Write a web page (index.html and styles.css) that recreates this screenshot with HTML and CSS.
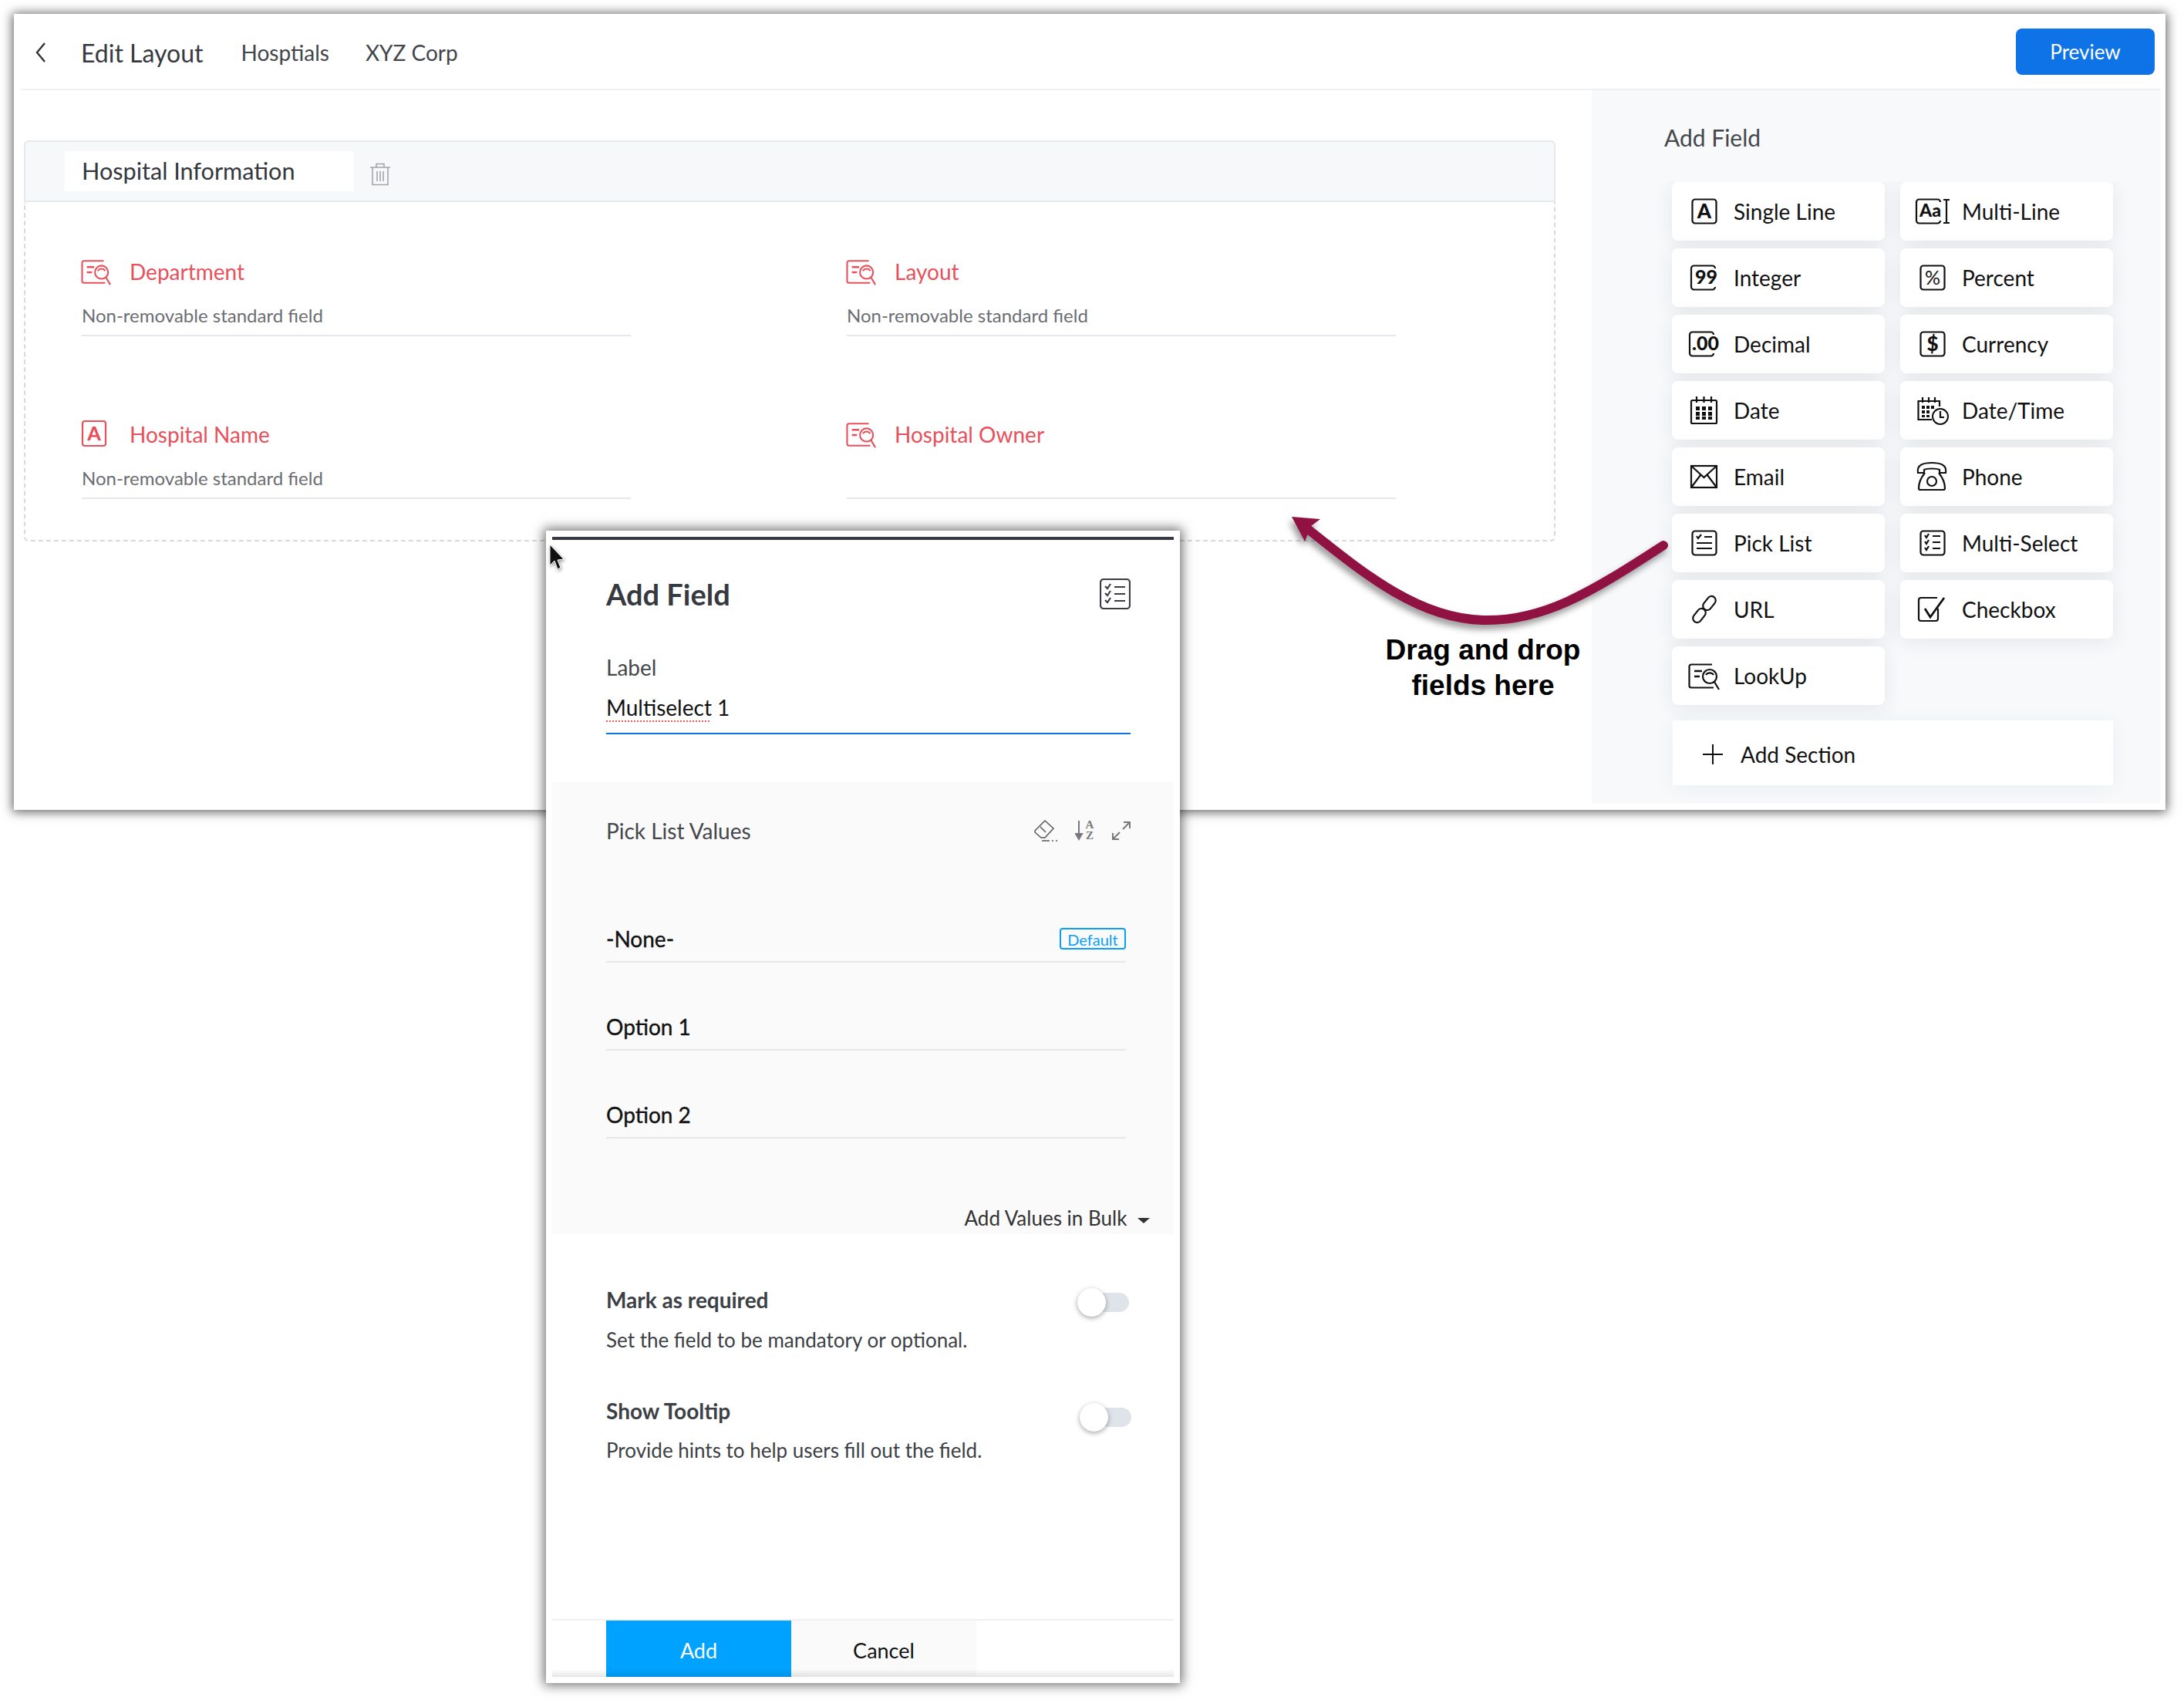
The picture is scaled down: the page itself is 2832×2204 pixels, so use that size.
FILE: index.html
```html
<!DOCTYPE html>
<html lang="en">
<head>
  <meta charset="UTF-8">
  <title>Edit Layout</title>
  <link rel="stylesheet" href="styles.css">
</head>
<body>

  <svg class="defs" width="0" height="0">
    <symbol id="i-lookup" viewBox="0 0 46 40">
      <path d="M33 5.5 H6 a2.5 2.5 0 0 0 -2.5 2.5 V33 a2.5 2.5 0 0 0 2.5 2.5 H35" fill="none" stroke="currentColor" stroke-width="2.2"/>
      <path d="M10 14 H20 M10 21 H17" fill="none" stroke="currentColor" stroke-width="2.6"/>
      <circle cx="30" cy="21" r="9" fill="#fff" stroke="currentColor" stroke-width="2.2"/>
      <path d="M25 19 a6 6 0 0 1 10 0 M36 28 L42 38" fill="none" stroke="currentColor" stroke-width="2.2"/>
    </symbol>
  </svg>

  <div class="window">
    <header class="topbar">
      <svg class="back" width="16" height="28" viewBox="0 0 16 28"><path d="M13 2 L3 14 L13 26" fill="none" stroke="#333" stroke-width="2.4"/></svg>
      <h1 class="page-title">Edit Layout</h1>
      <span class="crumb">Hosptials</span>
      <span class="crumb">XYZ Corp</span>
      <button class="btn-preview">Preview</button>
    </header>

    <div class="main">
      <div class="canvas">
        <section class="section">
          <div class="section-head">
            <div class="section-name">Hospital Information</div>
            <svg class="trash" width="28" height="30" viewBox="0 0 28 30">
              <path d="M1 6 H27 M9 6 V1.5 H19 V6 M4 6 V28.5 H24 V6 M10 11 V24 M14 11 V24 M18 11 V24" fill="none" stroke="#a2a4a8" stroke-width="1.6"/>
            </svg>
          </div>
          <div class="section-body">
            <div class="field">
              <div class="field-head">
                <svg class="field-icon" width="44" height="38"><use href="#i-lookup"/></svg>
                <span>Department</span>
              </div>
              <div class="field-sub">Non-removable standard field</div>
            </div>
            <div class="field">
              <div class="field-head">
                <svg class="field-icon" width="44" height="38"><use href="#i-lookup"/></svg>
                <span>Layout</span>
              </div>
              <div class="field-sub">Non-removable standard field</div>
            </div>
            <div class="field">
              <div class="field-head">
                <svg class="field-icon" width="44" height="38" viewBox="-3 -2 44 38">
                  <rect x="1" y="0" width="30" height="32" rx="3" fill="none" stroke="currentColor" stroke-width="2.2"/>
                  <text x="16" y="25" text-anchor="middle" class="icon-text" font-size="25">A</text>
                </svg>
                <span>Hospital Name</span>
              </div>
              <div class="field-sub">Non-removable standard field</div>
            </div>
            <div class="field">
              <div class="field-head">
                <svg class="field-icon" width="44" height="38"><use href="#i-lookup"/></svg>
                <span>Hospital Owner</span>
              </div>
              <div class="field-sub"></div>
            </div>
          </div>
        </section>
      </div>

      <aside class="side">
        <h2 class="side-title">Add Field</h2>
        <div class="tiles">
          <div class="tile">
            <svg class="tile-icon" width="46" height="40" viewBox="0 0 46 40">
              <rect x="7.500" y="4.500" width="31" height="31" rx="3.500" class="ln"/>
              <text x="23" y="29" text-anchor="middle" class="icon-text" font-size="26">A</text>
            </svg>
            <span>Single Line</span>
          </div>
          <div class="tile">
            <svg class="tile-icon" width="46" height="40" viewBox="0 0 46 40">
              <path d="M33 8 a3.500 3.500 0 0 0 -3.500 -3.500 H5.500 a3.500 3.500 0 0 0 -3.500 3.500 V32 a3.500 3.500 0 0 0 3.500 3.500 H29.500 a3.500 3.500 0 0 0 3.500 -3.500" class="ln"/>
              <text x="6" y="27" class="icon-text" font-size="23">Aa</text>
              <path d="M37 5 H45 M41 5 V35 M37 35 H45" class="ln"/>
            </svg>
            <span>Multi-Line</span>
          </div>
          <div class="tile">
            <svg class="tile-icon" width="46" height="40" viewBox="0 0 46 40">
              <path d="M37 8 a3.500 3.500 0 0 0 -3.500 -3.500 H9.500 a3.500 3.500 0 0 0 -3.500 3.500 V32 a3.500 3.500 0 0 0 3.500 3.500 H33.500 a3.500 3.500 0 0 0 3.500 -3.500" class="ln"/>
              <text x="11" y="28" class="icon-text" font-size="25">99</text>
            </svg>
            <span>Integer</span>
          </div>
          <div class="tile">
            <svg class="tile-icon" width="46" height="40" viewBox="0 0 46 40">
              <rect x="7.500" y="4.500" width="31" height="31" rx="3.500" class="ln"/>
              <text x="23" y="29" text-anchor="middle" class="icon-text-thin" font-size="25">%</text>
            </svg>
            <span>Percent</span>
          </div>
          <div class="tile">
            <svg class="tile-icon" width="46" height="40" viewBox="0 0 46 40">
              <path d="M35 8 a3.500 3.500 0 0 0 -3.500 -3.500 H7.500 a3.500 3.500 0 0 0 -3.500 3.500 V32 a3.500 3.500 0 0 0 3.500 3.500 H31.500 a3.500 3.500 0 0 0 3.500 -3.500" class="ln"/>
              <text x="7" y="28" class="icon-text" font-size="25">.00</text>
            </svg>
            <span>Decimal</span>
          </div>
          <div class="tile">
            <svg class="tile-icon" width="46" height="40" viewBox="0 0 46 40">
              <rect x="7.500" y="4.500" width="31" height="31" rx="3.500" class="ln"/>
              <text x="23" y="29" text-anchor="middle" class="icon-text" font-size="26">$</text>
            </svg>
            <span>Currency</span>
          </div>
          <div class="tile">
            <svg class="tile-icon" width="46" height="40" viewBox="0 0 46 40">
              <rect x="6" y="7" width="33" height="30" rx="1.500" class="ln"/>
              <path d="M13 2 V10 M22.500 2 V10 M32 2 V10" class="ln"/>
              <path d="M12 15 h5 v5 h-5z M20 15 h5 v5 h-5z M28 15 h5 v5 h-5z M12 22 h5 v5 h-5z M20 22 h5 v5 h-5z M28 22 h5 v5 h-5z M12 28 h5 v4 h-5z M20 28 h5 v4 h-5z M28 28 h5 v4 h-5z" fill="#111"/>
            </svg>
            <span>Date</span>
          </div>
          <div class="tile">
            <svg class="tile-icon" width="46" height="40" viewBox="0 0 46 40">
              <path d="M22 32 H4.500 V8 H32 V15" class="ln"/>
              <path d="M10 3 V10 M18 3 V10 M26 3 V10" class="ln"/>
              <path d="M9 14 h4 v4 h-4z M15 14 h4 v4 h-4z M21 14 h4 v4 h-4z M9 20 h4 v4 h-4z M15 20 h4 v4 h-4z M9 26 h4 v3 h-4z M15 26 h4 v3 h-4z" fill="#111"/>
              <circle cx="33" cy="28" r="10" fill="#fff" stroke="#111" stroke-width="2"/>
              <path d="M33 21 V29 H38" class="ln"/>
            </svg>
            <span>Date/Time</span>
          </div>
          <div class="tile">
            <svg class="tile-icon" width="46" height="40" viewBox="0 0 46 40">
              <rect x="6" y="6" width="33" height="28" class="ln"/>
              <path d="M6 6 L22.500 21 L39 6 M6 34 L18 18 M39 34 L27 18" class="ln"/>
            </svg>
            <span>Email</span>
          </div>
          <div class="tile">
            <svg class="tile-icon" width="46" height="40" viewBox="0 0 46 40">
              <path d="M4 15 C2 4 12 2 22 2 C32 2 42 4 40 15 H32 V11 C28 9 16 9 12 11 V15 Z" class="ln"/>
              <path d="M13 15 C9 20 5 28 5 35 a2 2 0 0 0 2 2 H37 a2 2 0 0 0 2 -2 C39 28 35 20 31 15" class="ln"/>
              <circle cx="22" cy="26" r="6" class="ln"/>
            </svg>
            <span>Phone</span>
          </div>
          <div class="tile">
            <svg class="tile-icon" width="46" height="40" viewBox="0 0 46 40">
              <rect x="7.500" y="4.500" width="31" height="31" rx="3.500" class="ln"/>
              <path d="M13 11 L15 14 L19 9 M23 12 H33 M13 20 H33 M13 27 H33" class="ln"/>
            </svg>
            <span>Pick List</span>
          </div>
          <div class="tile">
            <svg class="tile-icon" width="46" height="40" viewBox="0 0 46 40">
              <rect x="7.500" y="4.500" width="31" height="31" rx="3.500" class="ln"/>
              <path d="M13 10 L15 13 L18 8 M13 18 L15 21 L18 16 M13 26 L15 29 L18 24 M23 11 H33 M23 19 H33 M23 27 H33" class="ln"/>
            </svg>
            <span>Multi-Select</span>
          </div>
          <div class="tile">
            <svg class="tile-icon" width="46" height="40" viewBox="0 0 46 40">
              <rect x="24" y="2" width="11" height="20" rx="5.500" transform="rotate(38 29.500 12)" class="ln"/>
              <rect x="11" y="18" width="11" height="20" rx="5.500" transform="rotate(38 16.500 28)" class="ln"/>
            </svg>
            <span>URL</span>
          </div>
          <div class="tile">
            <svg class="tile-icon" width="46" height="40" viewBox="0 0 46 40">
              <path d="M29 5 H8 a3 3 0 0 0 -3 3 V32 a3 3 0 0 0 3 3 H27 a3 3 0 0 0 3 -3 V19" class="ln"/>
              <path d="M13 19 L20 30 L38 5" fill="none" stroke="#111" stroke-width="2.800"/>
            </svg>
            <span>Checkbox</span>
          </div>
          <div class="tile">
            <svg class="tile-icon" width="46" height="40"><use href="#i-lookup"/></svg>
            <span>LookUp</span>
          </div>
        </div>
        <div class="add-section">
          <svg width="28" height="28" viewBox="0 0 28 28"><path d="M14 1 V27 M1 14 H27" fill="none" stroke="#111" stroke-width="2"/></svg>
          <span>Add Section</span>
        </div>
      </aside>
    </div>
  </div>

  <!-- callout over the screenshot -->
  <svg class="arrow" width="520" height="170" viewBox="1660 660 520 170">
    <path d="M2157 707 C2060 770 2000 806 1923 804 C1840 802 1770 745 1696 686" fill="none" stroke="#8f1243" stroke-width="12" stroke-linecap="round"/>
    <path d="M1675 670 L1712 673 L1700 682 L1692 702 Z" fill="#8f1243"/>
  </svg>
  <div class="hint">Drag and drop<br>fields here</div>

  <div class="dialog">
    <div class="dialog-bar"></div>
    <svg class="cursor" width="24" height="38" viewBox="0 0 24 38"><path d="M2 1 V28 L8 22 L12 33 L16 31 L12 21 L20 20 Z" fill="#111" stroke="#fff" stroke-width="1"/></svg>

    <div class="dialog-head">
      <h2 class="dialog-title">Add Field</h2>
      <svg width="40" height="40" viewBox="0 0 40 40">
        <rect x="1" y="1" width="38" height="38" rx="4" fill="none" stroke="#3a3d44" stroke-width="2.200"/>
        <path d="M7 10 L10 13 L14 7 M7 19 L10 22 L14 16 M7 28 L10 31 L14 25 M19 11 H33 M19 20 H33 M19 29 H33" fill="none" stroke="#3a3d44" stroke-width="2.200"/>
      </svg>
    </div>

    <div class="label-row">Label</div>
    <div class="value-row"><span class="misspelt">Multiselect</span> 1</div>

    <div class="values">
      <div class="values-head">
        <span>Pick List Values</span>
        <div class="values-tools">
          <svg width="32" height="30" viewBox="0 0 32 30">
            <path d="M2 15 L15 2 L26 12 L15 24 H10 L2 17 Z M9 10 L16 17 M11 28 H21 M24 28 H26 M29 28 H31" fill="none" stroke="#55585e" stroke-width="1.500"/>
          </svg>
          <svg width="26" height="34" viewBox="0 -3 26 34">
            <path d="M5 1 V21 M1 18 L5 25 L9 18 Z" fill="#77797d" stroke="#77797d" stroke-width="2"/>
            <text x="19" y="11" text-anchor="middle" class="az-text">A</text>
            <text x="19" y="25" text-anchor="middle" class="az-text">Z</text>
          </svg>
          <svg width="24" height="24" viewBox="0 0 24 24">
            <path d="M14 10 L23 1 M15 1 H23 V9 M10 14 L1 23 M1 15 V23 H9" fill="none" stroke="#77797d" stroke-width="2"/>
          </svg>
        </div>
      </div>
      <div class="value-item value-first"><span>-None-</span><span class="badge">Default</span></div>
      <div class="value-item"><span>Option 1</span></div>
      <div class="value-item"><span>Option 2</span></div>
      <div class="bulk">Add Values in Bulk <span class="caret"></span></div>
    </div>

    <div class="opt opt-first">
      <div>
        <div class="opt-title">Mark as required</div>
        <div class="opt-desc">Set the field to be mandatory or optional.</div>
      </div>
      <div class="toggle"><span class="knob"></span></div>
    </div>
    <div class="opt opt-second">
      <div>
        <div class="opt-title">Show Tooltip</div>
        <div class="opt-desc">Provide hints to help users fill out the field.</div>
      </div>
      <div class="toggle"><span class="knob"></span></div>
    </div>

    <div class="dialog-foot">
      <button class="btn-add">Add</button>
      <button class="btn-cancel">Cancel</button>
    </div>
  </div>

</body>
</html>
```

FILE: styles.css
```css
* {
  box-sizing: border-box;
}

body {
  margin: 0;
  font-family: Lato, "Open Sans", sans-serif;
  color: #333;
  background: #fff;
  height: 2204px;
  overflow: hidden;
}

.defs {
  position: absolute;
}

h1, h2 {
  margin: 0;
  font-weight: 400;
}

button {
  font-family: inherit;
  border: none;
  cursor: pointer;
}

.window {
  margin: 18px 0 0 18px;
  width: 2790px;
  height: 1032px;
  background: #fff;
  padding: 0 7px 8px 9px;
  display: flex;
  flex-direction: column;
  box-shadow: 0 1px 13px 2px rgba(0, 0, 0, 0.6);
}

.topbar {
  height: 99px;
  display: flex;
  align-items: center;
  border-bottom: 2px solid #eeeff2;
  padding: 3px 0 0 18px;
  flex-shrink: 0;
}

.back {
  margin-right: 44px;
}

.page-title {
  font-size: 32px;
  color: #36393f;
  margin-right: 49px;
}

.crumb {
  font-size: 28px;
  color: #43464b;
  margin-right: 47px;
}

.btn-preview {
  margin: -2px 7px 0 auto;
  width: 180px;
  height: 60px;
  background: #0f73e8;
  color: #fff;
  font-size: 26px;
  border-radius: 8px;
}

.main {
  flex: 1;
  display: flex;
  min-height: 0;
}

.canvas {
  width: 2037px;
  padding: 65px 0 0 4px;
}

.section {
  width: 1986px;
}

.section-head {
  height: 80px;
  background: #f7f8fa;
  border: 2px solid #e8e9ee;
  border-radius: 6px 6px 0 0;
  display: flex;
  align-items: center;
  padding-left: 51px;
}

.section-name {
  width: 375px;
  height: 52px;
  background: #fff;
  font-size: 30.6px;
  line-height: 52px;
  padding-left: 22px;
  color: #34373c;
}

.trash {
  margin-left: 20px;
  margin-top: 8px;
}

.section-body {
  height: 440px;
  border: 2px dashed #d9d9dc;
  border-top: none;
  border-radius: 0 0 6px 6px;
  padding: 70px 0 0 73px;
  display: grid;
  grid-template-columns: 712px 712px;
  column-gap: 280px;
  row-gap: 107px;
  align-content: start;
}

.field-head {
  height: 40px;
  display: flex;
  align-items: center;
  gap: 21px;
  font-size: 28px;
  color: #e8505b;
}

.field-icon {
  margin-left: -3px;
  color: #e8505b;
  flex-shrink: 0;
}

.field-sub {
  margin-top: 12px;
  height: 52px;
  line-height: 50px;
  font-size: 24px;
  color: #6b6d72;
  border-bottom: 2px solid #e6e7ec;
}

.side {
  flex: 1;
  background: #f8f9fb;
  padding-top: 43px;
  display: flex;
  flex-direction: column;
}

.side-title {
  font-size: 30px;
  line-height: 36px;
  color: #44474b;
  padding-left: 94px;
}

.tiles {
  margin-top: 40px;
  padding: 0 0 20px 104px;
  display: grid;
  grid-template-columns: 276px 276px;
  grid-auto-rows: 76px;
  column-gap: 20px;
  row-gap: 10px;
  overflow: hidden;
}

.tile {
  background: #fff;
  border-radius: 8px;
  display: flex;
  align-items: center;
  padding-left: 19px;
  gap: 15px;
  font-size: 28px;
  color: #111;
  box-shadow: 0 4px 26px rgba(30, 40, 60, 0.09);
}

.ln {
  fill: none;
  stroke: #111;
  stroke-width: 2.2;
}

.icon-text {
  font-family: Lato, sans-serif;
  font-weight: 900;
  fill: currentColor;
}

.icon-text-thin {
  font-family: Lato, sans-serif;
  fill: #111;
}

.add-section {
  margin-left: 105px;
  width: 571px;
  height: 84px;
  background: #fff;
  display: flex;
  align-items: center;
  padding: 3px 0 0 38px;
  gap: 22px;
  font-size: 28px;
  color: #111;
  box-shadow: 0 4px 26px rgba(30, 40, 60, 0.05);
}

.arrow {
  position: absolute;
  left: 1660px;
  top: 660px;
  filter: drop-shadow(-3px 6px 4px rgba(0, 0, 0, 0.4));
}

.hint {
  position: absolute;
  left: 1773px;
  top: 820px;
  width: 300px;
  text-align: center;
  font-family: "Liberation Sans", Arial, sans-serif;
  font-weight: 700;
  font-size: 37px;
  line-height: 46px;
  color: #000;
}

.dialog {
  position: absolute;
  left: 708px;
  top: 688px;
  width: 822px;
  height: 1494px;
  background: #fff;
  padding: 8px;
  display: flex;
  flex-direction: column;
  box-shadow: 0 0 14px 3px rgba(0, 0, 0, 0.55);
}

.dialog-bar {
  height: 4px;
  background: #363a42;
  flex-shrink: 0;
}

.cursor {
  position: absolute;
  left: 3px;
  top: 17px;
  filter: drop-shadow(1px 2px 2px rgba(0, 0, 0, 0.4));
}

.dialog-head {
  margin-top: 40px;
  height: 60px;
  padding: 0 56px 0 70px;
  display: flex;
  align-items: center;
  justify-content: space-between;
}

.dialog-title {
  font-size: 38px;
  font-weight: 700;
  color: #36393f;
}

.label-row,
.value-row {
  margin: 48px 56px 0 70px;
  font-size: 28px;
  line-height: 34px;
  color: #44474b;
}

.value-row {
  margin-top: 18px;
  padding-bottom: 16px;
  border-bottom: 2px solid #0f73e8;
  color: #111;
}

.misspelt {
  text-decoration: underline dotted #ee5a5a 2px;
  text-underline-offset: 6px;
}

.values {
  margin-top: 62px;
  height: 586px;
  background: #fafafa;
  padding: 46px 62px 0 70px;
  flex-shrink: 0;
}

.values-head {
  display: flex;
  align-items: center;
  justify-content: space-between;
  height: 34px;
  font-size: 28px;
  line-height: 34px;
  color: #44474b;
  margin-right: -6px;
}

.values-tools {
  display: flex;
  align-items: center;
  gap: 22px;
}

.az-text {
  font-family: "Liberation Serif", serif;
  font-size: 15px;
  font-weight: 700;
  fill: #77797d;
}

.value-item {
  margin-top: 66px;
  height: 48px;
  padding-bottom: 12px;
  display: flex;
  align-items: center;
  justify-content: space-between;
  font-size: 28px;
  line-height: 34px;
  color: #111;
  -webkit-text-stroke: 0.35px #111;
  border-bottom: 2px solid #e6e7ea;
}

.value-first {
  margin-top: 106px;
}

.badge {
  width: 86px;
  height: 28px;
  border: 2px solid #0aa0f5;
  border-radius: 4px;
  color: #0aa0f5;
  -webkit-text-stroke: 0;
  font-size: 20px;
  line-height: 26px;
  text-align: center;
}

.bulk {
  margin-top: 86px;
  margin-right: -31px;
  text-align: right;
  font-size: 26px;
  line-height: 34px;
  color: #333;
}

.caret {
  display: inline-block;
  margin-left: 7px;
  vertical-align: middle;
  border-left: 8px solid transparent;
  border-right: 8px solid transparent;
  border-top: 7px solid #333;
}

.opt {
  padding: 0 58px 0 70px;
  display: flex;
  justify-content: space-between;
  align-items: flex-start;
}

.opt-first {
  margin-top: 68px;
}

.opt-second {
  margin-top: 58px;
  padding-right: 55px;
}

.opt-title {
  font-size: 28px;
  line-height: 34px;
  font-weight: 700;
  color: #3c3f45;
}

.opt-desc {
  margin-top: 18px;
  font-size: 26px;
  line-height: 34px;
  color: #3c3f45;
}

.opt-second .opt-desc {
  margin-top: 17px;
}

.toggle {
  position: relative;
  width: 67px;
  height: 25px;
  margin-top: 8px;
  background: #dfe3ea;
  border-radius: 13px;
}

.opt-second .toggle {
  margin-top: 13px;
}

.knob {
  position: absolute;
  left: 0;
  top: -6px;
  width: 37px;
  height: 37px;
  background: #fff;
  border-radius: 50%;
  box-shadow: 0 2px 6px rgba(0, 0, 0, 0.35);
}

.dialog-foot {
  position: relative;
  margin-top: auto;
  height: 75px;
  border-top: 2px solid #f0f0f2;
  padding-left: 70px;
  display: flex;
  flex-shrink: 0;
}

.dialog-foot::after {
  content: "";
  position: absolute;
  left: 0;
  right: 0;
  bottom: 0;
  height: 10px;
  background: linear-gradient(rgba(0, 0, 0, 0), rgba(0, 0, 0, 0.1));
}

.btn-add,
.btn-cancel {
  width: 240px;
  padding-top: 4px;
  font-size: 27px;
}

.btn-add {
  background: #00a2ff;
  color: #fff;
}

.btn-cancel {
  background: #fafafa;
  color: #111;
}
```
